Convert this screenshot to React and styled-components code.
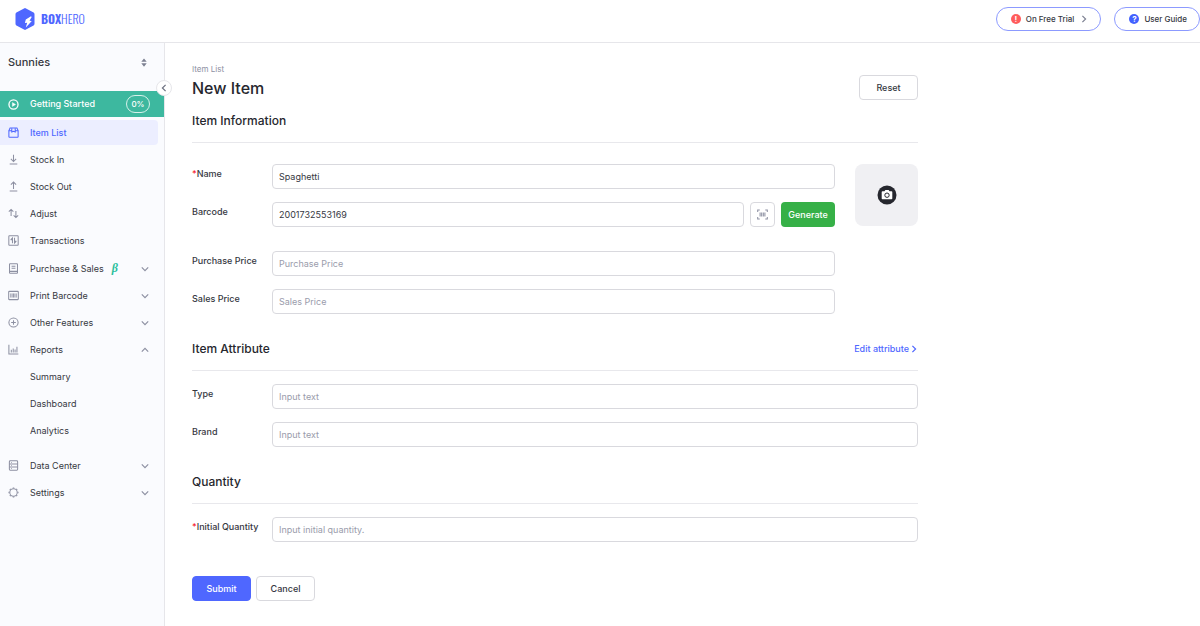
import React, { useState } from "react";
import styled, { createGlobalStyle, css } from "styled-components";

const GlobalStyle = createGlobalStyle`
  * {
    box-sizing: border-box;
  }
  body {
    margin: 0;
    background: #fff;
    color: #36383f;
    font-family: Inter, "Liberation Sans", sans-serif;
    font-size: 9px;
    line-height: 20px;
  }
  button,
  input {
    margin: 0;
    font: inherit;
    color: inherit;
  }
`;

const icons = {
  start: (
    <>
      <circle cx="8" cy="8" r="6.6" strokeWidth="1.9" />
      <path d="M6.4 5.2 11 8l-4.6 2.8z" fill="currentColor" strokeWidth="0.6" />
    </>
  ),
  items: (
    <>
      <path d="M3 1.5h10l1.7 3.6V14a.8.8 0 0 1-.8.8H2.1a.8.8 0 0 1-.8-.8V5.1z" />
      <path d="M1.3 5.3h4.2M10.5 5.3h4.2M5.5 1.8v5.4L8 6.1l2.5 1.1V1.8" />
    </>
  ),
  stockIn: <path d="M8 1v10M4.2 7.2 8 11l3.800-3.800M2.500 14.500h11" />,
  stockOut: <path d="M8 11.800V1.800M4.200 5.400 8 1.600l3.800 3.800M2.500 14.500h11" />,
  adjust: (
    <path d="M4.5 11.5V2.2M1.2 5.400l3.300-3.300 3.300 3.300M11.500 4.500v9.300M8.200 10.600l3.300 3.300 3.300-3.300" />
  ),
  transactions: (
    <>
      <rect x="1.2" y="1.2" width="13.6" height="13.6" rx="0.8" />
      <path d="M6.5 12V4.2L3.8 6.900M9.500 4v7.800l2.700-2.700M3.800 6.900h2.700M9.500 9.100h2.700" />
    </>
  ),
  purchase: (
    <>
      <rect x="2.2" y="1.2" width="11.6" height="13.6" rx="0.8" />
      <path d="M5.200 4.800h5.600M5.200 7.600h5.600M2.200 12.200h11.600" />
    </>
  ),
  barcode: (
    <>
      <rect x="1" y="2" width="14" height="12" rx="0.8" />
      <path
        d="M4 5v6M6 5v6M8 5v6M10 5v6M12 5v6"
        strokeWidth="1.3"
      />
    </>
  ),
  other: (
    <>
      <circle cx="8" cy="8" r="6.7" />
      <path d="M8 4.600v6.800M4.600 8h6.800" />
    </>
  ),
  reports: (
    <path d="M1.3 1v13.500H15M4.800 12.500V8.500M7.600 12.500V6.500M10.300 12.500V8M13 12.500V4" />
  ),
  data: (
    <>
      <rect x="2" y="1.2" width="12" height="13.6" rx="1.2" />
      <path d="M2 5.700h12M2 10.300h12M4.500 3.500h1M4.500 8h1M4.500 12.500h1" />
    </>
  ),
  settings: (
    <>
      <circle cx="8" cy="8" r="5.4" />
      <path
        d="M8 .7v1.500M8 13.800v1.500M.7 8h1.500M13.800 8h1.500M2.800 2.800l1.100 1.100M12.100 12.100l1.100 1.100M2.800 13.200l1.100-1.100M12.100 3.900l1.100-1.100"
        strokeWidth="2.2"
      />
    </>
  ),
  scan: (
    <>
      <path d="M1 4.500V1.500h3M12 1.500h3v3M15 11.500v3h-3M4 14.500H1v-3" />
      <path d="M4.500 5v6M6.800 5v6M9.200 5v6M11.500 5v6" strokeWidth="1.5" />
    </>
  ),
};

const Icon = ({ name, size = 11 }) => (
  <Svg viewBox="0 0 16 16" width={size} height={size} aria-hidden="true">
    {icons[name]}
  </Svg>
);

const chevrons = {
  down: "M1 3l4 4 4-4",
  up: "M1 7l4-4 4 4",
  left: "M7 1L3 5l4 4",
  right: "M3 1l4 4-4 4",
};

const Chevron = ({ to, size = 8 }) => (
  <Svg viewBox="0 0 10 10" width={size} height={size} aria-hidden="true">
    <path d={chevrons[to]} />
  </Svg>
);

const menu = [
  [
    { icon: "items", label: "Item List", active: true },
    { icon: "stockIn", label: "Stock In" },
    { icon: "stockOut", label: "Stock Out" },
    { icon: "adjust", label: "Adjust" },
    { icon: "transactions", label: "Transactions" },
  ],
  [
    { icon: "purchase", label: "Purchase & Sales", beta: true, arrow: "down" },
    { icon: "barcode", label: "Print Barcode", arrow: "down" },
    { icon: "other", label: "Other Features", arrow: "down" },
    { icon: "reports", label: "Reports", arrow: "up" },
    { label: "Summary" },
    { label: "Dashboard" },
    { label: "Analytics" },
  ],
  [
    { icon: "data", label: "Data Center", arrow: "down" },
    { icon: "settings", label: "Settings", arrow: "down" },
  ],
];

const Sidebar = () => (
  <Side>
    <CollapseButton type="button" aria-label="Collapse menu">
      <Chevron to="left" />
    </CollapseButton>
    <TeamButton type="button">
      Sunnies
      <svg viewBox="0 0 8 12" width="6" height="9" aria-hidden="true">
        <path d="M4 .5 7.600 5H.4zM4 11.500 7.600 7H.4z" fill="#7d8192" />
      </svg>
    </TeamButton>
    <StartLink href="#start">
      <Icon name="start" />
      <MenuLabel>Getting Started</MenuLabel>
      <Percent>0%</Percent>
    </StartLink>
    <nav>
      {menu.map((group, i) => (
        <MenuGroup key={i}>
          {group.map((item) => (
            <li key={item.label}>
              <MenuLink href="#menu" $active={item.active}>
                <IconSlot>{item.icon && <Icon name={item.icon} />}</IconSlot>
                <MenuLabel>
                  {item.label}
                  {item.beta && <Beta>β</Beta>}
                </MenuLabel>
                {item.arrow && <Chevron to={item.arrow} />}
              </MenuLink>
            </li>
          ))}
        </MenuGroup>
      ))}
    </nav>
  </Side>
);

const Field = ({ id, label, required, children, ...input }) => (
  <FieldRow>
    <Label htmlFor={id}>
      {required && <Star>*</Star>}
      {label}
    </Label>
    <Control>
      <Input id={id} type="text" {...input} />
      {children}
    </Control>
  </FieldRow>
);

const App = () => {
  const [name, setName] = useState("Spaghetti");
  const [barcode, setBarcode] = useState("2001732553169");

  return (
    <Page>
      <GlobalStyle />
      <Header>
        <Logo href="#home" aria-label="BoxHero">
          <svg viewBox="0 0 20 22" width="20" height="22" aria-hidden="true">
            <path
              d="M9 .4a2 2 0 0 1 2 0l7.600 4.200a1.800 1.800 0 0 1 .9 1.600v9.600a1.800 1.800 0 0 1-.9 1.600L11 21.600a2 2 0 0 1-2 0l-7.600-4.200a1.800 1.800 0 0 1-.9-1.600V6.200a1.800 1.800 0 0 1 .9-1.600z"
              fill="#4f67ff"
            />
            <path
              d="M16 8.300 10.800 11.400 9.900 15l2.300-.3-1.400 4.700 6-6.400-2.300-.2 2.200-3.900z"
              fill="#fff"
            />
          </svg>
          <LogoText>
            <b>BOX</b>HERO
          </LogoText>
        </Logo>
        <HeaderLinks>
          <Pill type="button">
            <Dot $color="#ff5c5c">!</Dot>
            On Free Trial
            <PillArrow>
              <Chevron to="right" />
            </PillArrow>
          </Pill>
          <Pill type="button">
            <Dot $color="#4361ff">?</Dot>
            User Guide
          </Pill>
        </HeaderLinks>
      </Header>
      <Body>
        <Sidebar />
        <Main>
          <Form onSubmit={(e) => e.preventDefault()}>
            <Crumb href="#items">Item List</Crumb>
            <TitleRow>
              <Title>New Item</Title>
              <Button type="reset">Reset</Button>
            </TitleRow>

            <SectionHead>
              <SectionTitle>Item Information</SectionTitle>
            </SectionHead>
            <InfoRow>
              <Fields>
                <FieldGroup>
                  <Field
                    id="name"
                    label="Name"
                    required
                    value={name}
                    onChange={(e) => setName(e.target.value)}
                  />
                  <Field
                    id="barcode"
                    label="Barcode"
                    value={barcode}
                    onChange={(e) => setBarcode(e.target.value)}
                  >
                    <ScanButton type="button" aria-label="Scan barcode">
                      <Icon name="scan" />
                    </ScanButton>
                    <GenerateButton type="button">Generate</GenerateButton>
                  </Field>
                </FieldGroup>
                <FieldGroup>
                  <Field
                    id="purchase"
                    label="Purchase Price"
                    placeholder="Purchase Price"
                  />
                  <Field
                    id="sales"
                    label="Sales Price"
                    placeholder="Sales Price"
                  />
                </FieldGroup>
              </Fields>
              <PhotoButton type="button" aria-label="Add photo">
                <svg viewBox="0 0 20 20" width="20" height="20">
                  <circle cx="10" cy="10" r="9.5" fill="#26272e" />
                  <path
                    d="M5.500 6.300h2l.9-1.200h3.200l.9 1.200h2a.8.8 0 0 1 .8.8v6.300a.8.8 0 0 1-.8.8h-9a.8.8 0 0 1-.8-.8V7.100a.8.8 0 0 1 .8-.8z"
                    fill="#fff"
                  />
                  <circle
                    cx="10"
                    cy="10.2"
                    r="2.2"
                    fill="#fff"
                    stroke="#26272e"
                    strokeWidth="1"
                  />
                </svg>
              </PhotoButton>
            </InfoRow>

            <SectionHead $spaced>
              <SectionTitle>Item Attribute</SectionTitle>
              <EditLink href="#attributes">
                Edit attribute
                <Chevron to="right" />
              </EditLink>
            </SectionHead>
            <FieldGroup>
              <Field id="type" label="Type" placeholder="Input text" />
              <Field id="brand" label="Brand" placeholder="Input text" />
            </FieldGroup>

            <SectionHead $spaced>
              <SectionTitle>Quantity</SectionTitle>
            </SectionHead>
            <FieldGroup>
              <Field
                id="quantity"
                label="Initial Quantity"
                required
                placeholder="Input initial quantity."
              />
            </FieldGroup>

            <Actions>
              <Button type="submit" $primary>
                Submit
              </Button>
              <Button type="button">Cancel</Button>
            </Actions>
          </Form>
        </Main>
      </Body>
    </Page>
  );
};

const Svg = styled.svg`
  display: block;
  flex: none;
  fill: none;
  stroke: currentColor;
  stroke-width: 1.5;
`;

const Page = styled.div`
  display: flex;
  flex-direction: column;
  min-height: 100vh;
`;

const Header = styled.header`
  display: flex;
  align-items: center;
  justify-content: space-between;
  padding: 7px 0 11px 15px;
  border-bottom: 1px solid #e6e6ea;
`;

const Logo = styled.a`
  display: flex;
  align-items: center;
  gap: 6px;
  color: #4f67ff;
  text-decoration: none;
`;

const LogoText = styled.span`
  font-family: Oswald, "Roboto Condensed", "Open Sans Condensed",
    "Liberation Sans Narrow", Roboto, sans-serif;
  font-size: 12px;
  font-weight: 300;

  b {
    font-weight: 700;
  }
`;

const HeaderLinks = styled.div`
  display: flex;
  gap: 13px;
`;

const Pill = styled.button`
  display: flex;
  align-items: center;
  height: 24px;
  padding: 0 12px 0 14px;
  border: 1px solid #8c9aff;
  border-radius: 12px;
  background: #fff;
  font-size: 8px;
  font-weight: 500;
  cursor: pointer;
`;

const Dot = styled.span`
  display: flex;
  align-items: center;
  justify-content: center;
  width: 10px;
  height: 10px;
  margin-right: 5px;
  border-radius: 50%;
  background: ${(props) => props.$color};
  color: #fff;
  font-weight: 700;
`;

const PillArrow = styled.span`
  margin-left: 6px;
  color: #7d8192;
`;

const Body = styled.div`
  display: flex;
  flex: 1;
`;

const Side = styled.aside`
  position: relative;
  flex: none;
  width: 165px;
  border-right: 1px solid #e6e6ea;
  background: #fafbfe;
`;

const CollapseButton = styled.button`
  position: absolute;
  top: 37px;
  right: -8px;
  display: flex;
  align-items: center;
  justify-content: center;
  width: 16px;
  height: 16px;
  padding: 0;
  border: 1px solid #e6e6ea;
  border-radius: 50%;
  background: #fff;
  color: #6c7080;
  cursor: pointer;
`;

const TeamButton = styled.button`
  display: flex;
  align-items: center;
  justify-content: space-between;
  width: 100%;
  height: 48px;
  padding: 0 17px 10px 8px;
  border: 0;
  background: none;
  font-size: 11px;
  font-weight: 500;
  cursor: pointer;
`;

const StartLink = styled.a`
  display: flex;
  align-items: center;
  gap: 11px;
  height: 26px;
  margin-bottom: 3px;
  padding: 0 14px 0 8px;
  background: #3db89f;
  color: #fff;
  font-weight: 500;
  text-decoration: none;
`;

const Percent = styled.span`
  width: 24px;
  border: 1px solid #d5f1ea;
  border-radius: 9px;
  font-size: 8px;
  line-height: 16px;
  text-align: center;
`;

const MenuGroup = styled.ul`
  display: flex;
  flex-direction: column;
  gap: 2px;
  margin: 0 0 3px;
  padding: 0;
  list-style: none;

  &:last-child {
    padding-top: 7px;
  }
`;

const MenuLink = styled.a`
  display: flex;
  align-items: center;
  gap: 11px;
  height: 25px;
  margin-right: 6px;
  padding: 0 9px 0 8px;
  border-radius: 0 4px 4px 0;
  text-decoration: none;
  color: #36383f;

  svg {
    color: #8d90a2;
  }

  ${(props) =>
    props.$active &&
    css`
      background: #eceeff;
      color: #4f67ff;
      font-weight: 500;

      svg {
        color: #4f67ff;
      }
    `}
`;

const IconSlot = styled.span`
  width: 11px;
`;

const MenuLabel = styled.span`
  flex: 1;
  white-space: nowrap;
`;

const Beta = styled.i`
  margin-left: 8px;
  color: #2bbf9c;
  font-family: "Liberation Serif", serif;
  font-size: 12px;
  font-weight: 700;
  line-height: 1;
`;

const Main = styled.main`
  flex: 1;
  min-width: 0;
  padding: 21px 27px;
`;

const Form = styled.form`
  max-width: 726px;
`;

const Crumb = styled.a`
  display: block;
  color: #8d90a2;
  font-size: 8px;
  line-height: 11px;
  text-decoration: none;
`;

const TitleRow = styled.div`
  display: flex;
  align-items: center;
  justify-content: space-between;
`;

const Title = styled.h1`
  margin: 0;
  font-size: 16px;
  font-weight: 500;
  color: #26272e;
`;

const Button = styled.button`
  width: 59px;
  height: 25px;
  padding: 0;
  border: 1px solid ${(props) => (props.$primary ? "#4f67ff" : "#d9d9de")};
  border-radius: 4px;
  background: ${(props) => (props.$primary ? "#4f67ff" : "#fff")};
  color: ${(props) => (props.$primary ? "#fff" : "#36383f")};
  font-weight: 500;
  cursor: pointer;
`;

const SectionHead = styled.div`
  display: flex;
  align-items: center;
  justify-content: space-between;
  margin: ${(props) => (props.$spaced ? "25px 0 13px" : "11px 0 21px")};
  padding-bottom: 11px;
  border-bottom: 1px solid #e8e8ec;
`;

const SectionTitle = styled.h2`
  margin: 0;
  font-size: 12px;
  font-weight: 500;
  color: #26272e;
`;

const EditLink = styled.a`
  display: flex;
  align-items: center;
  gap: 1px;
  color: #4f67ff;
  font-weight: 500;
  text-decoration: none;
`;

const InfoRow = styled.div`
  display: flex;
  align-items: flex-start;
  gap: 20px;
`;

const Fields = styled.div`
  display: flex;
  flex: 1;
  flex-direction: column;
  gap: 24px;
  min-width: 0;
`;

const FieldGroup = styled.div`
  display: flex;
  flex-direction: column;
  gap: 13px;
`;

const FieldRow = styled.div`
  display: flex;
  align-items: flex-start;
`;

const Label = styled.label`
  flex: none;
  width: 80px;
  font-weight: 500;
  white-space: nowrap;
`;

const Star = styled.span`
  color: #f5222d;
`;

const Control = styled.div`
  display: flex;
  flex: 1;
  gap: 6px;
  min-width: 0;
`;

const Input = styled.input`
  flex: 1;
  min-width: 0;
  height: 25px;
  padding: 0 6px;
  border: 1px solid #d9d9de;
  border-radius: 4px;
  background: #fff;

  &::placeholder {
    color: #9a9cab;
    opacity: 1;
  }
`;

const ScanButton = styled.button`
  display: flex;
  align-items: center;
  justify-content: center;
  width: 25px;
  height: 25px;
  padding: 0;
  border: 1px solid #d9d9de;
  border-radius: 4px;
  background: #fff;
  color: #8d90a2;
  cursor: pointer;
`;

const GenerateButton = styled.button`
  width: 54px;
  height: 25px;
  padding: 0;
  border: 0;
  border-radius: 4px;
  background: #36b047;
  color: #fff;
  font-weight: 500;
  cursor: pointer;
`;

const PhotoButton = styled.button`
  display: flex;
  align-items: center;
  justify-content: center;
  width: 63px;
  height: 62px;
  padding: 0;
  border: 0;
  border-radius: 8px;
  background: #f0f0f3;
  cursor: pointer;
`;

const Actions = styled.div`
  display: flex;
  gap: 5px;
  margin-top: 34px;
`;

export default App;
